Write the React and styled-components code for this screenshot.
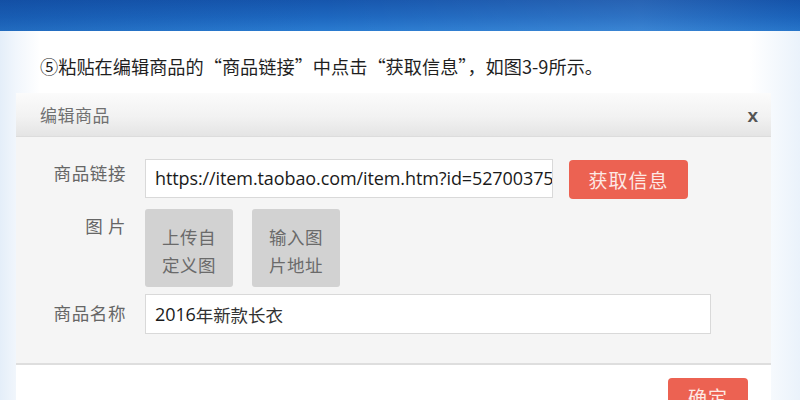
import React from "react";
import styled, { createGlobalStyle } from "styled-components";

const Global = createGlobalStyle`
  html, body { margin: 0; padding: 0; }
  body { width: 800px; height: 400px; overflow: hidden; background: #fff; }
  * { box-sizing: border-box; }
`;

const Page = styled.div`
  width: 800px;
  height: 400px;
  overflow: hidden;
  display: flex;
  flex-direction: column;
  background: linear-gradient(90deg, #e4eef9 0px, #f1f6fc 16px, #ffffff 40px, #ffffff 750px, #eaf2fb 800px);
  font-family: "Noto Sans CJK SC", "Noto Sans", sans-serif;
`;

const Banner = styled.div`
  height: 31px;
  flex: none;
  background:
    linear-gradient(90deg, rgba(10, 60, 140, 0.25) 0%, rgba(255, 255, 255, 0) 40%, rgba(255, 255, 255, 0.08) 80%, rgba(10, 60, 140, 0.1) 100%),
    linear-gradient(180deg, #1656ad 0%, #1d67bf 55%, #2a7bd0 100%);
`;

const Intro = styled.p`
  flex: none;
  margin: 0;
  height: 62px;
  padding: 22px 0 0 40px;
  font-family: "Noto Sans CJK SC", "Liberation Serif", serif;
  font-size: 18.2px;
  line-height: 26px;
  color: #1f1f1f;
  white-space: nowrap;
`;

const Dialog = styled.section`
  margin: 0 29px 0 16px;
  flex: 1 1 auto;
  min-height: 0;
  overflow: hidden;
  display: flex;
  flex-direction: column;
  background: #fff;
`;

const Header = styled.header`
  height: 44px;
  flex: none;
  display: flex;
  align-items: center;
  justify-content: space-between;
  padding: 0 13px 0 24px;
  background: linear-gradient(180deg, #fbfbfb 0%, #f2f2f2 55%, #e4e4e4 100%);
  border-bottom: 1px solid #dcdcdc;
`;

const Title = styled.h2`
  margin: 0;
  font-size: 17px;
  font-weight: 400;
  color: #707070;
  letter-spacing: 0.5px;
`;

const Close = styled.span`
  font-family: "Liberation Sans", Arial, sans-serif;
  font-size: 19px;
  font-weight: 700;
  color: #555;
  margin-top: 2px;
`;

const Body = styled.div`
  flex: none;
  background: #f5f5f5;
  padding: 20px 0 29px 0;
  border-bottom: 2px solid #dedede;
  display: grid;
  grid-template-columns: 129px 1fr;
  row-gap: 10px;
`;

const Label = styled.label`
  align-self: start;
  padding: ${(p) => p.$pad || 3}px 19px 0 0;
  text-align: right;
  font-size: 17.5px;
  line-height: 26px;
  color: #666;
  letter-spacing: 0.6px;
  white-space: pre;
`;

const Field = styled.div`
  display: flex;
  align-items: center;
  gap: 16px;
  margin-top: ${(p) => p.$mt || 0}px;
`;

const Input = styled.div`
  flex: none;
  width: ${(p) => p.$w}px;
  height: ${(p) => p.$h || 39}px;
  background: #fff;
  border: 1px solid #d9d9d9;
  padding: 0 0 0 9px;
  display: flex;
  align-items: center;
  overflow: hidden;
  white-space: nowrap;
  font-family: "Open Sans", "Noto Sans CJK SC", sans-serif;
  font-size: 18px;
  letter-spacing: -0.1px;
  color: #1a1a1a;
`;

const CjkPart = styled.span`
  font-family: "Noto Sans CJK SC", sans-serif;
  font-size: 17.5px;
  color: #333;
`;

const RedButton = styled.button`
  flex: none;
  width: ${(p) => p.$w}px;
  height: ${(p) => p.$h}px;
  border: none;
  border-radius: 4px;
  background: #ec6252;
  color: #fde9e5;
  font-family: "Noto Sans CJK SC", sans-serif;
  font-size: 19px;
  letter-spacing: 1px;
  padding: 0;
  display: flex;
  align-items: ${(p) => (p.$top ? "flex-start" : "center")};
  justify-content: center;
  line-height: 1;
  padding-top: ${(p) => (p.$top ? 9 : 0)}px;
`;

const Tiles = styled.div`
  display: flex;
  gap: 19px;
`;

const Tile = styled.div`
  width: 88px;
  height: 78px;
  background: #d2d2d2;
  border-radius: 3px;
  display: flex;
  flex-direction: column;
  align-items: center;
  justify-content: center;
  padding-top: 6px;
  font-size: 17.5px;
  line-height: 28px;
  color: #6a6a6a;
  letter-spacing: 0.5px;
`;

const Footer = styled.footer`
  flex: 1;
  display: flex;
  justify-content: flex-end;
  padding: 13px 23px 0 0;
  background: #fff;
`;

export default function App() {
  return (
    <Page>
      <Global />
      <Banner />
      <Intro>⑤粘贴在编辑商品的“商品链接”中点击“获取信息”，如图3-9所示。</Intro>
      <Dialog>
        <Header>
          <Title>编辑商品</Title>
          <Close>x</Close>
        </Header>
        <Body>
          <Label $pad={3}>商品链接</Label>
          <Field>
            <Input $w={408}>https://item.taobao.com/item.htm?id=52700375</Input>
            <RedButton $w={119} $h={39} style={{ marginTop: 3 }}>获取信息</RedButton>
          </Field>
          <Label $pad={4}>{"图 片"}</Label>
          <Tiles>
            <Tile>
              <span>上传自</span>
              <span>定义图</span>
            </Tile>
            <Tile>
              <span>输入图</span>
              <span>片地址</span>
            </Tile>
          </Tiles>
          <Label $pad={0}>商品名称</Label>
          <Field $mt={-3}>
            <Input $w={566} $h={40}>
              2016<CjkPart>年新款长衣</CjkPart>
            </Input>
          </Field>
        </Body>
        <Footer>
          <RedButton $w={80} $h={40} $top>确定</RedButton>
        </Footer>
      </Dialog>
    </Page>
  );
}
